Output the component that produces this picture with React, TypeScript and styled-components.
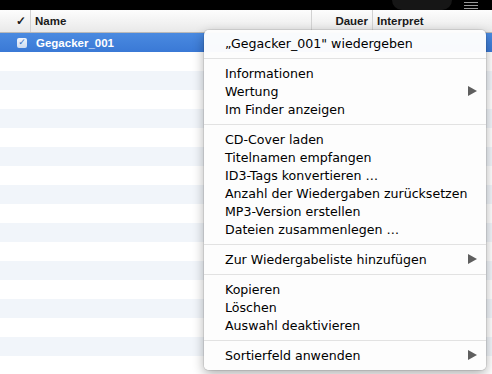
import React from "react";
import styled, { createGlobalStyle } from "styled-components";

const GlobalStyle = createGlobalStyle`
    html, body {
        margin:0;
        padding:0;
        width:492px;
        height:374px;
        overflow:hidden;
        background:#fff;
    }
`;

const Page = styled.div`
    position:relative;
    width:492px;
    height:374px;
    overflow:hidden;
    font-family:"DejaVu Sans", "Liberation Sans", sans-serif;
`;

const TopBar = styled.div`
    height:10px;
    background:#000;
    display:flex;
    justify-content:flex-end;
    align-items:flex-start;
    padding-right:14px;
`;

const Knob = styled.div`
    width:60px;
    height:10px;
    margin-right:12px;
    border-radius:0 0 30px 30px;
    background:#161616;
`;

const Lines = styled.div`
    display:flex;
    flex-direction:column;
    gap:2px;
    padding-top:2px;
    span{
        display:block;
        width:14px;
        height:1px;
        background:#9a9a9a;
    }
`;

const Header = styled.div`
    height:22px;
    display:flex;
    align-items:center;
    background:linear-gradient(#fdfdfd, #e9e9e9);
    border-bottom:1px solid #b9b9b9;
    font-family:"Liberation Sans", Arial, sans-serif;
    font-weight:bold;
    font-size:11.5px;
    color:#1a1a1a;
`;

const HeadCell = styled.div<{ $w?: number; $align?: string }>`
    height:100%;
    display:flex;
    align-items:center;
    justify-content:${p => p.$align || "flex-start"};
    width:${p => (p.$w ? `${p.$w}px` : "auto")};
    flex:${p => (p.$w ? "none" : "1")};
    padding:0 4px;
    box-sizing:border-box;
    border-right:1px solid #d2d2d2;
    &:last-child{ border-right:none; }
`;

const Row = styled.div<{ $alt?: boolean; $selected?: boolean }>`
    height:19px;
    display:flex;
    align-items:center;
    background:${p => (p.$selected ? "linear-gradient(#4a8ae0, #3a79d6)" : p.$alt ? "#f1f5fa" : "#fff")};
    color:${p => (p.$selected ? "#fff" : "#000")};
`;

const CheckBox = styled.span`
    width:10px;
    height:10px;
    margin-left:17px;
    margin-right:9px;
    border-radius:2px;
    background:linear-gradient(#f2f6fc, #cddbf0);
    display:flex;
    align-items:center;
    justify-content:center;
    font-size:9px;
    line-height:1;
    color:#3a6fc0;
    font-family:"DejaVu Sans", sans-serif;
`;

const TrackName = styled.span`
    font-family:"Liberation Sans", Arial, sans-serif;
    font-weight:bold;
    font-size:11.5px;
`;

const Menu = styled.div`
    position:absolute;
    left:204px;
    top:30px;
    width:282px;
    padding:4px 0 6px;
    background:rgba(253,253,253,0.98);
    border-radius:5px;
    box-shadow:0 4px 12px rgba(0,0,0,0.32), 0 0 0 1px rgba(0,0,0,0.08);
    font-size:12.6px;
    color:#000;
`;

const Item = styled.div`
    height:18px;
    display:flex;
    align-items:center;
    justify-content:space-between;
    padding:0 9px 0 21px;
    white-space:nowrap;
`;

const Arrow = styled.span`
    width:0;
    height:0;
    border-top:5px solid transparent;
    border-bottom:5px solid transparent;
    border-left:9px solid #5f5f5f;
`;

const Separator = styled.div`
    height:12px;
    display:flex;
    align-items:center;
    &::after{
        content:"";
        flex:1;
        height:1px;
        background:#e2e2e2;
    }
`;

type Entry = { label: string; sub?: boolean } | "sep";

const entries: Entry[] = [
    { label: "„Gegacker_001\" wiedergeben" },
    "sep",
    { label: "Informationen" },
    { label: "Wertung", sub: true },
    { label: "Im Finder anzeigen" },
    "sep",
    { label: "CD-Cover laden" },
    { label: "Titelnamen empfangen" },
    { label: "ID3-Tags konvertieren …" },
    { label: "Anzahl der Wiedergaben zurücksetzen" },
    { label: "MP3-Version erstellen" },
    { label: "Dateien zusammenlegen …" },
    "sep",
    { label: "Zur Wiedergabeliste hinzufügen", sub: true },
    "sep",
    { label: "Kopieren" },
    { label: "Löschen" },
    { label: "Auswahl deaktivieren" },
    "sep",
    { label: "Sortierfeld anwenden", sub: true },
];

function App() {
    const rows = Array.from({ length: 18 }, (_, i) => i);
    return (
        <Page>
            <GlobalStyle />
            <TopBar>
                <Knob />
                <Lines><span /><span /><span /></Lines>
            </TopBar>
            <Header>
                <HeadCell $w={31} $align="flex-end">✓</HeadCell>
                <HeadCell $w={281}>Name</HeadCell>
                <HeadCell $w={61} $align="flex-end">Dauer</HeadCell>
                <HeadCell>Interpret</HeadCell>
            </Header>
            <Row $selected>
                <CheckBox>✓</CheckBox>
                <TrackName>Gegacker_001</TrackName>
            </Row>
            {rows.map(i => (
                <Row key={i} $alt={i % 2 === 1} />
            ))}
            <Menu>
                {entries.map((e, i) =>
                    e === "sep" ? (
                        <Separator key={i} />
                    ) : (
                        <Item key={i}>
                            {e.label}
                            {e.sub && <Arrow />}
                        </Item>
                    )
                )}
            </Menu>
        </Page>
    );
}

export default App;
